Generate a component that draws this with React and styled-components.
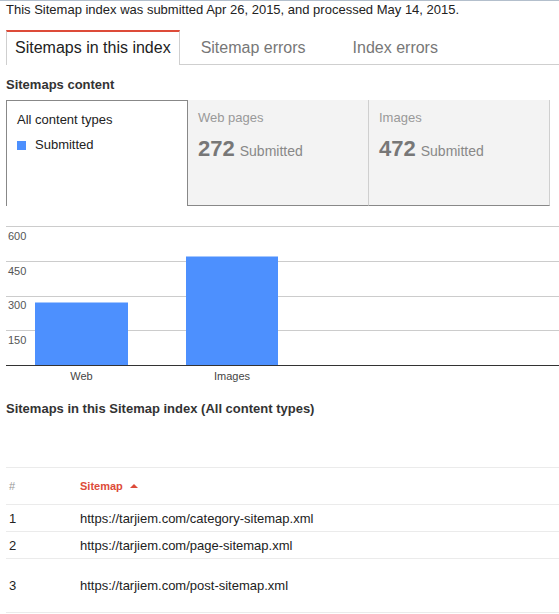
import React from "react";
import styled, { createGlobalStyle } from "styled-components";

const GlobalStyle = createGlobalStyle`
  html, body { margin: 0; padding: 0; background: #fff; }
  body {
    font-family: "Liberation Sans", Arial, sans-serif;
    color: #222;
    width: 559px;
    overflow: hidden;
  }
`;

const Page = styled.div`
  width: 559px;
  border-top: 1px solid #b3bfcc;
`;

const Content = styled.div`
  padding-left: 6px;
`;

const Intro = styled.div`
  margin-top: 1px;
  font-size: 13px;
  line-height: 16px;
  color: #222;
`;

const TabBar = styled.div`
  display: flex;
  margin-top: 12px;
  border-bottom: 1px solid #cfcfcf;
`;

const Tab = styled.div`
  font-size: 16px;
  line-height: 32px;
  white-space: nowrap;
  border-top: 2px solid ${(p) => (p.$active ? "#dd4b39" : "transparent")};
  ${(p) =>
    p.$active
      ? `
    color: #222;
    background: #fff;
    border-left: 1px solid #cfcfcf;
    border-right: 1px solid #cfcfcf;
    padding: 0 8px 1px;
    margin-bottom: -1px;
  `
      : `
    color: #777;
    padding: 0 26px 0 21px;
  `}
`;

const SectionTitle = styled.div`
  font-size: 13px;
  line-height: 16px;
  font-weight: bold;
  color: #333;
  margin-top: ${(p) => p.$top}px;
  margin-bottom: ${(p) => p.$bottom}px;
`;

const Cards = styled.div`
  display: flex;
  height: 106px;
`;

const TypeCard = styled.div`
  box-sizing: border-box;
  width: 182px;
  height: 106px;
  background: #fff;
  border: 1px solid #888;
  border-bottom: none;
  padding: 11px 10px 0;
  font-size: 13px;
  line-height: 16px;
  color: #222;
`;

const Legend = styled.div`
  display: flex;
  align-items: center;
  gap: 9px;
  margin-top: 9px;
`;

const Swatch = styled.span`
  display: inline-block;
  width: 9px;
  height: 9px;
  background: #4d90fe;
`;

const StatCard = styled.div`
  box-sizing: border-box;
  width: 181px;
  height: 106px;
  background: #f3f3f3;
  border-right: 1px solid #cfcfcf;
  border-bottom: 1px solid #888;
  padding: 10px 10px 0;
`;

const StatLabel = styled.div`
  font-size: 13px;
  line-height: 16px;
  color: #999;
`;

const StatValue = styled.div`
  margin-top: 10px;
  line-height: 26px;
  display: flex;
  align-items: baseline;
`;

const Number = styled.span`
  font-size: 22px;
  font-weight: bold;
  color: #777;
`;

const Unit = styled.span`
  font-size: 14px;
  color: #888;
  margin-left: 5px;
`;

const ChartWrap = styled.div`
  margin-top: 14px;
  height: 170px;
`;

const Table = styled.div`
  margin-top: 50px;
  border-top: 1px solid #ebebeb;
`;

const Row = styled.div`
  display: flex;
  align-items: center;
  height: ${(p) => p.$h}px;
  border-bottom: 1px solid #ebebeb;
  font-size: ${(p) => (p.$head ? 11 : 13)}px;
  color: #222;
`;

const NumCell = styled.div`
  width: 71px;
  padding-left: 3px;
  color: ${(p) => (p.$head ? "#999" : "#222")};
`;

const UrlCell = styled.div`
  display: flex;
  align-items: center;
`;

const SortHead = styled.span`
  color: #dd4b39;
  font-weight: bold;
`;

const SortArrow = styled.span`
  display: inline-block;
  width: 0;
  height: 0;
  margin-left: 7px;
  border-left: 4px solid transparent;
  border-right: 4px solid transparent;
  border-bottom: 4px solid #dd4b39;
`;

const grid = [
  { y: 6.5, label: "600", ty: 20 },
  { y: 41.5, label: "450", ty: 55 },
  { y: 76.5, label: "300", ty: 89 },
  { y: 110.5, label: "150", ty: 124 },
];

const bars = [
  { x: 29, w: 93, h: 62.5, label: "Web", cx: 75.5 },
  { x: 180, w: 92, h: 108.5, label: "Images", cx: 226 },
];

function Chart() {
  return (
    <svg width="553" height="170" viewBox="0 0 553 170">
      {grid.map((g) => (
        <line key={g.label} x1="0" x2="553" y1={g.y} y2={g.y} stroke="#cccccc" strokeWidth="1" />
      ))}
      {bars.map((b) => (
        <rect key={b.label} x={b.x} y={145 - b.h} width={b.w} height={b.h} fill="#4d90fe" />
      ))}
      <line x1="0" x2="553" y1="145.5" y2="145.5" stroke="#333" strokeWidth="1" />
      {grid.map((g) => (
        <text
          key={"t" + g.label}
          x="2"
          y={g.ty}
          fontFamily="Liberation Sans, Arial, sans-serif"
          fontSize="11"
          fill="#555"
        >
          {g.label}
        </text>
      ))}
      {bars.map((b) => (
        <text
          key={"l" + b.label}
          x={b.cx}
          y="160"
          textAnchor="middle"
          fontFamily="Liberation Sans, Arial, sans-serif"
          fontSize="11"
          fill="#444"
        >
          {b.label}
        </text>
      ))}
    </svg>
  );
}

const rows = [
  { n: "1", url: "https://tarjiem.com/category-sitemap.xml", h: 26 },
  { n: "2", url: "https://tarjiem.com/page-sitemap.xml", h: 26 },
  { n: "3", url: "https://tarjiem.com/post-sitemap.xml", h: 53 },
];

export default function App() {
  return (
    <>
      <GlobalStyle />
      <Page>
        <Content>
          <Intro>This Sitemap index was submitted Apr 26, 2015, and processed May 14, 2015.</Intro>
          <TabBar>
            <Tab $active>Sitemaps in this index</Tab>
            <Tab>Sitemap errors</Tab>
            <Tab>Index errors</Tab>
          </TabBar>
          <SectionTitle $top={12} $bottom={7}>Sitemaps content</SectionTitle>
          <Cards>
            <TypeCard>
              <div>All content types</div>
              <Legend>
                <Swatch />
                <span>Submitted</span>
              </Legend>
            </TypeCard>
            <StatCard>
              <StatLabel>Web pages</StatLabel>
              <StatValue>
                <Number>272</Number>
                <Unit>Submitted</Unit>
              </StatValue>
            </StatCard>
            <StatCard>
              <StatLabel>Images</StatLabel>
              <StatValue>
                <Number>472</Number>
                <Unit>Submitted</Unit>
              </StatValue>
            </StatCard>
          </Cards>
          <ChartWrap>
            <Chart />
          </ChartWrap>
          <SectionTitle $top={11} $bottom={0}>
            Sitemaps in this Sitemap index (All content types)
          </SectionTitle>
          <Table>
            <Row $h={36} $head>
              <NumCell $head>#</NumCell>
              <UrlCell>
                <SortHead>Sitemap</SortHead>
                <SortArrow />
              </UrlCell>
            </Row>
            {rows.map((r) => (
              <Row key={r.n} $h={r.h}>
                <NumCell>{r.n}</NumCell>
                <UrlCell>{r.url}</UrlCell>
              </Row>
            ))}
          </Table>
        </Content>
      </Page>
    </>
  );
}
